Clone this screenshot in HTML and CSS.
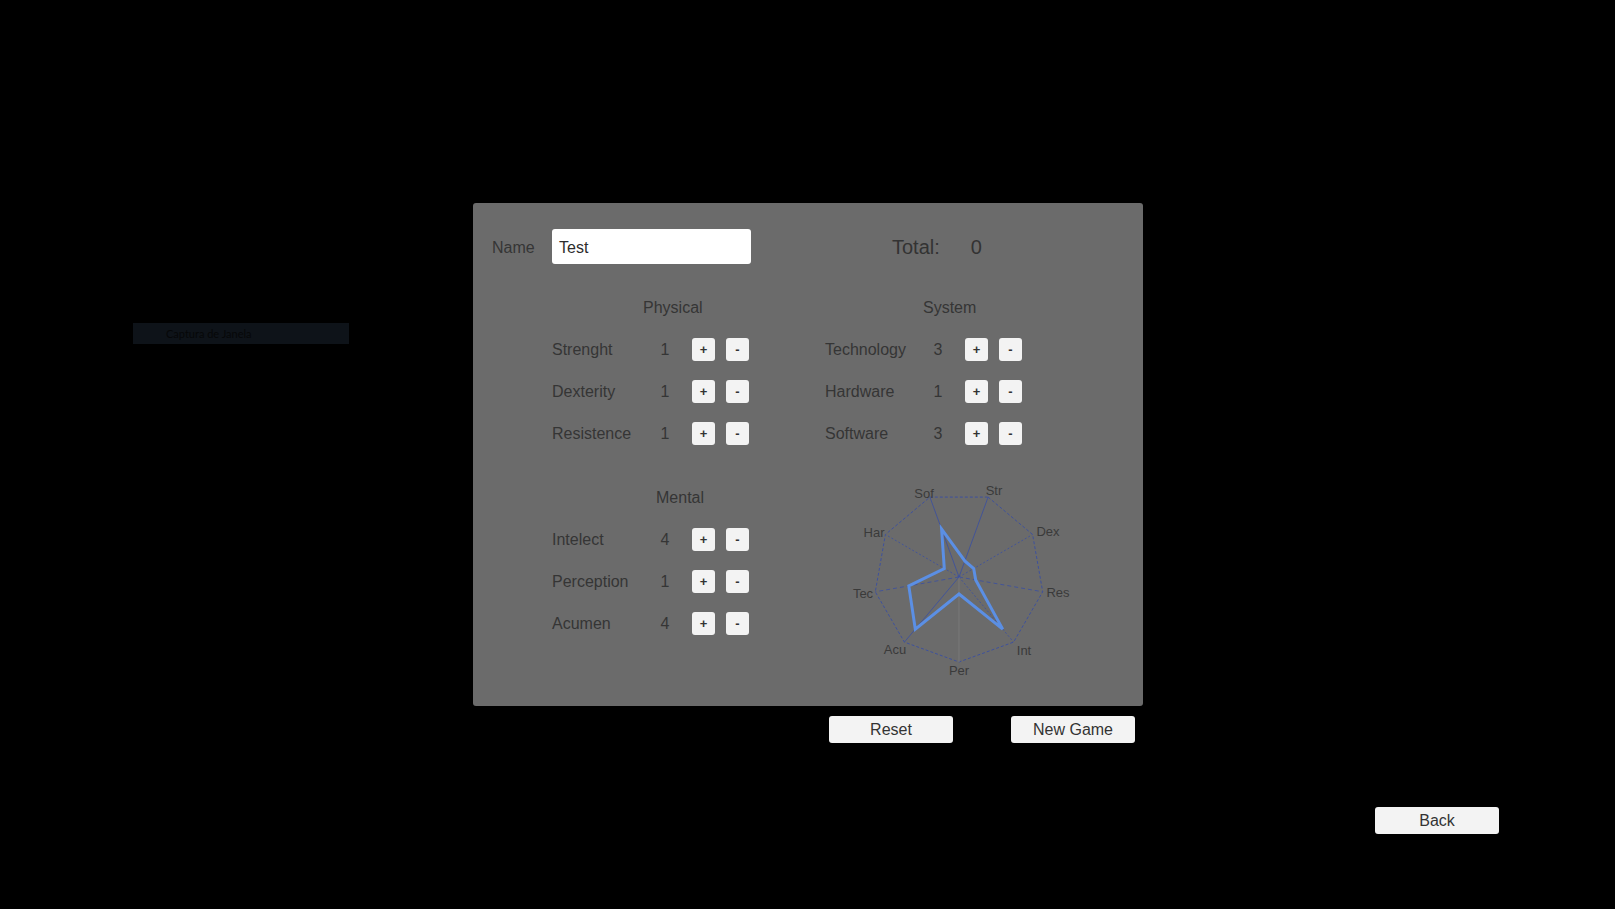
FILE: index.html
```html
<!DOCTYPE html>
<html>
<head>
<meta charset="utf-8">
<title>Character</title>
<link rel="stylesheet" href="styles.css">
</head>
<body>
<div class="page">
  <div class="capture">Captura de Janela</div>

  <div class="panel">
    <div class="name-row">
      <span class="name-label">Name</span>
      <div class="name-input">Test</div>
      <span class="total-label">Total:</span>
      <span class="total-value">0</span>
    </div>

    <div class="sections">
      <div class="col">
        <div class="group">
          <div class="hdr hdr-phys">Physical</div>
          <div class="row"><span class="lbl">Strenght</span><span class="val">1</span><span class="btn">+</span><span class="btn">-</span></div>
          <div class="row"><span class="lbl">Dexterity</span><span class="val">1</span><span class="btn">+</span><span class="btn">-</span></div>
          <div class="row"><span class="lbl">Resistence</span><span class="val">1</span><span class="btn">+</span><span class="btn">-</span></div>
        </div>
        <div class="group">
          <div class="hdr hdr-ment">Mental</div>
          <div class="row"><span class="lbl">Intelect</span><span class="val">4</span><span class="btn">+</span><span class="btn">-</span></div>
          <div class="row"><span class="lbl">Perception</span><span class="val">1</span><span class="btn">+</span><span class="btn">-</span></div>
          <div class="row"><span class="lbl">Acumen</span><span class="val">4</span><span class="btn">+</span><span class="btn">-</span></div>
        </div>
      </div>
      <div class="col">
        <div class="group">
          <div class="hdr hdr-sys">System</div>
          <div class="row"><span class="lbl">Technology</span><span class="val">3</span><span class="btn">+</span><span class="btn">-</span></div>
          <div class="row"><span class="lbl">Hardware</span><span class="val">1</span><span class="btn">+</span><span class="btn">-</span></div>
          <div class="row"><span class="lbl">Software</span><span class="val">3</span><span class="btn">+</span><span class="btn">-</span></div>
        </div>
        <svg class="radar" width="270" height="214" viewBox="0 0 270 214">
          <g class="outer">
            <polygon points="163.1,21.1 207.6,58.5 217.7,115.8 188.6,166.1 134,186 79.4,166.1 50.3,115.8 60.4,58.5 104.9,21.1"/>
          </g>
          <g class="spokes">
            <line x1="134" y1="101" x2="163.1" y2="21.1" class="solid"/>
            <line x1="134" y1="101" x2="207.6" y2="58.5" class="dot"/>
            <line x1="134" y1="101" x2="217.7" y2="115.8" class="dash"/>
            <line x1="134" y1="101" x2="188.6" y2="166.1" class="dot"/>
            <line x1="134" y1="101" x2="134" y2="186" class="grey"/>
            <line x1="134" y1="101" x2="79.4" y2="166.1" class="solid"/>
            <line x1="134" y1="101" x2="50.3" y2="115.8" class="dash"/>
            <line x1="134" y1="101" x2="60.4" y2="58.5" class="dot"/>
            <line x1="134" y1="101" x2="104.9" y2="21.1" class="solid"/>
          </g>
          <polygon class="data" points="139.8,85 148.7,92.5 150.7,104 177.7,153.1 134,118 90.3,153.1 83.8,109.9 119.3,92.5 116.6,53.1"/>
          <g class="axis-labels">
            <text x="99" y="17">Sof</text>
            <text x="169" y="14">Str</text>
            <text x="223" y="55">Dex</text>
            <text x="233" y="116">Res</text>
            <text x="199" y="174">Int</text>
            <text x="134" y="194">Per</text>
            <text x="70" y="173">Acu</text>
            <text x="38" y="117">Tec</text>
            <text x="49" y="56">Har</text>
          </g>
        </svg>
      </div>
    </div>
  </div>

  <div class="actions">
    <div class="wide-btn">Reset</div>
    <div class="wide-btn">New Game</div>
  </div>

  <div class="back-row">
    <div class="wide-btn">Back</div>
  </div>
</div>
</body>
</html>
```

FILE: styles.css
```css
html, body {
  margin: 0;
  padding: 0;
  background: #000;
}

body {
  width: 1615px;
  height: 909px;
  overflow: hidden;
  font-family: "Liberation Sans", Arial, sans-serif;
  color: #333;
}

.page {
  position: relative;
  width: 1615px;
  height: 909px;
  padding-top: 203px;
  box-sizing: border-box;
}

.capture {
  position: absolute;
  left: 133px;
  top: 323px;
  width: 216px;
  height: 21px;
  box-sizing: border-box;
  padding-left: 33px;
  background: #0e1319;
  color: #060708;
  font-family: Lato, "Open Sans", sans-serif;
  font-size: 11px;
  line-height: 21px;
}

.panel {
  margin-left: 473px;
  width: 670px;
  height: 503px;
  box-sizing: border-box;
  padding: 26px 0 0 19px;
  background: #6b6b6b;
  border-radius: 3px;
}

.name-row {
  display: flex;
  align-items: center;
  height: 35px;
}

.name-label {
  width: 60px;
  font-size: 16px;
  color: #353535;
  padding-top: 2px;
}

.name-input {
  width: 199px;
  height: 35px;
  box-sizing: border-box;
  padding: 1px 0 0 7px;
  background: #fff;
  border-radius: 3px;
  color: #2c2c2c;
  font-size: 16px;
  line-height: 35px;
}

.total-label {
  margin-left: 141px;
  padding-top: 2px;
  font-size: 20px;
  color: #333;
}

.total-value {
  margin-left: 31px;
  padding-top: 2px;
  font-size: 20px;
  color: #333;
}

.sections {
  display: flex;
  gap: 76px;
  margin-top: 22px;
  padding-left: 60px;
}

.col {
  display: flex;
  flex-direction: column;
  gap: 22px;
  width: 197px;
}

.group {
  display: flex;
  flex-direction: column;
}

.hdr {
  height: 42px;
  line-height: 43px;
  font-size: 16px;
  color: #353535;
  white-space: nowrap;
}

.hdr-phys { padding-left: 91px; }
.hdr-sys { padding-left: 98px; }
.hdr-ment { padding-left: 104px; }

.row {
  display: flex;
  align-items: center;
  height: 42px;
  font-size: 16px;
  color: #353535;
}

.lbl {
  width: 100px;
  padding-top: 1px;
  white-space: nowrap;
}

.val {
  width: 26px;
  padding-top: 1px;
  text-align: center;
}

.btn {
  width: 23px;
  height: 23px;
  margin-left: 11px;
  background: #f3f3f3;
  border-radius: 3px;
  color: #333;
  font-size: 13px;
  font-weight: bold;
  line-height: 23px;
  text-align: center;
}

.val + .btn {
  margin-left: 14px;
}

.radar {
  display: block;
  overflow: visible;
}

.outer polygon {
  fill: none;
  stroke: #3e519c;
  stroke-width: 1;
  stroke-dasharray: 3 2;
}

.spokes line {
  stroke: #3e519c;
  stroke-width: 0.9;
}

.spokes .dot { stroke-dasharray: 2 2; }
.spokes .dash { stroke-dasharray: 4 3; }
.spokes .grey { stroke: #7a7a7a; }

.data {
  fill: none;
  stroke: #5b8fe4;
  stroke-width: 3;
  stroke-linejoin: miter;
}

.axis-labels text {
  font-family: "Liberation Sans", Arial, sans-serif;
  font-size: 13px;
  fill: #3a3a3a;
  text-anchor: middle;
  dominant-baseline: central;
}

.actions {
  display: flex;
  gap: 58px;
  margin-top: 10px;
  margin-left: 829px;
}

.wide-btn {
  width: 124px;
  height: 27px;
  background: #f3f3f3;
  border-radius: 3px;
  color: #333;
  font-size: 16px;
  line-height: 27px;
  text-align: center;
}

.back-row {
  display: flex;
  margin-top: 64px;
  margin-left: 1375px;
}
```
